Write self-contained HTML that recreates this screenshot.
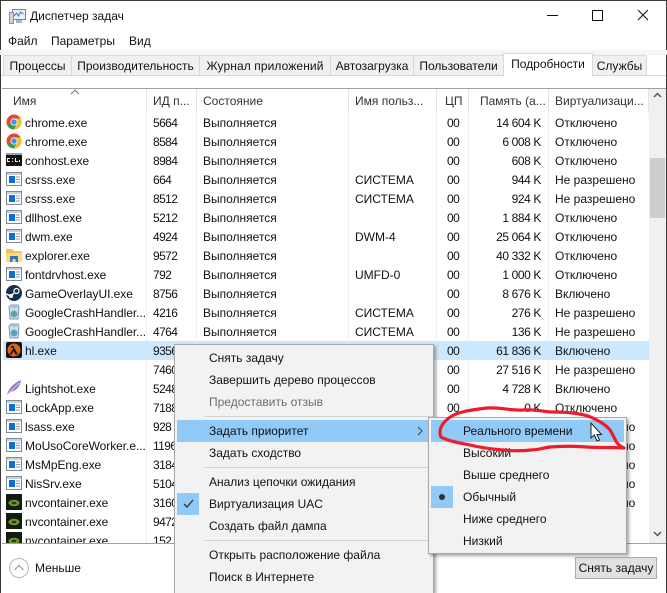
<!DOCTYPE html>
<html lang="ru"><head><meta charset="utf-8"><title>Диспетчер задач</title>
<style>
html,body{margin:0;padding:0;width:667px;height:593px;overflow:hidden}
body{background:#fff;position:relative;font:12px/16px "Liberation Sans",sans-serif;color:#111}
.a{position:absolute;white-space:nowrap}
.tab{position:absolute;top:55px;height:20px;background:#f0f0f0;border:1px solid #d9d9d9;border-bottom:0;box-sizing:border-box;text-align:center;line-height:20px;color:#111;font-size:12px}
.sep{position:absolute;top:89px;height:24px;width:1px;background:#e5e5e5}
.csep{position:absolute;top:113px;height:430px;width:1px;background:#e8f1f8}
.h{position:absolute;top:93px;color:#333;white-space:nowrap}
.row{position:absolute;left:3px;width:646px;height:19px;line-height:19px}
.row span{position:absolute;top:1px;white-space:nowrap}
.row svg{position:absolute;left:3px;top:1px}
.n{left:22px;letter-spacing:-.05px}.p{left:150px;letter-spacing:-.6px}.s{left:200px}.u{left:352px}.c{left:444px;letter-spacing:-.6px}.m{right:108px;letter-spacing:-.4px}.v{left:552px}
.menu{position:absolute;background:#f2f2f2;border:1px solid #a8a8a8;box-shadow:2px 2px 3px rgba(0,0,0,.35);box-sizing:border-box}
.mi{position:absolute;white-space:nowrap;line-height:22px;height:22px;color:#111}
.hl{position:absolute;background:#91c9f7}
.ms{position:absolute;height:1px;background:#d4d4d4}
</style></head>
<body>
<svg width="0" height="0" style="position:absolute">
<defs>
<symbol id="app" viewBox="0 0 16 16"><rect x=".5" y="1.5" width="15" height="13" fill="#fff" stroke="#7d8a96"/><rect x="1" y="2" width="14" height="2" fill="#c7d2dc"/><rect x="3" y="5" width="6" height="7" fill="#0a6fd8"/><path d="M10 6h4M10 8.500h4M10 11h4" stroke="#8b98a5"/></symbol>
<symbol id="chr" viewBox="0 0 16 16"><circle cx="8" cy="8" r="7.500" fill="#dd4b39"/><path d="M8 8 1.500 11.800A7.500 7.500 0 0 0 8 15.500L11.800 9z" fill="#3a9a4c"/><path d="M8 4.500h6.600A7.500 7.500 0 0 1 8 15.500L11 9z" fill="#f2c031"/><circle cx="8" cy="8" r="3.600" fill="#fff"/><circle cx="8" cy="8" r="2.800" fill="#4a8ee8"/></symbol>
<symbol id="con" viewBox="0 0 16 16"><rect y="1" width="16" height="13" fill="#111"/><rect y="1" width="16" height="2" fill="#9aa0a6"/><path d="M2 6h2v1H2v2h2v1H1V6zM6 6h1v1H6zM6 9h1v1H6zM9 6h1v3h2v1H9zM13 8h1v2h-1z" fill="#eee"/></symbol>
<symbol id="gch" viewBox="0 0 16 16"><path d="M3 3 5 1h7l1 2-1 12H4z" fill="#cfdfea" stroke="#7f98ad"/><circle cx="8" cy="10" r="3.500" fill="#5aa6e0"/><path d="M6 9l2 4 2-5z" fill="#5cae5a"/><path d="M5 3h6" stroke="#8fa6b8"/></symbol>
<symbol id="nv" viewBox="0 0 16 16"><rect width="16" height="16" fill="#161a12"/><ellipse cx="8" cy="9" rx="5.500" ry="3.200" fill="#6c9a2a"/><ellipse cx="8" cy="9" rx="2.500" ry="1.400" fill="#2a3a18"/></symbol>
</defs>
</svg>

<!-- window frame -->
<div class="a" style="left:0;top:0;width:667px;height:1px;background:#3a3a3a"></div>
<div class="a" style="left:0;top:0;width:1px;height:593px;background:#3a3a3a"></div>
<div class="a" style="left:666px;top:0;width:1px;height:593px;background:#3a3a3a"></div>

<!-- title -->
<svg class="a" style="left:9px;top:8px" width="17" height="17" viewBox="0 0 17 17"><rect x="3.500" y="1.500" width="13" height="10" fill="#e6f0f8" stroke="#76869a"/><path d="M5 8l2.500-3 2 3 2-4 3 2" fill="none" stroke="#3a78b8"/><rect x=".5" y="4.500" width="4" height="11" fill="#cbd3da" stroke="#8a939c"/><rect x="7" y="12" width="6" height="3" fill="#aab4bd"/></svg>
<div class="a" style="left:30px;top:8px">Диспетчер задач</div>
<div class="a" style="left:547px;top:15px;width:11px;height:1px;background:#111"></div>
<div class="a" style="left:592px;top:10px;width:9px;height:9px;border:1px solid #111"></div>
<svg class="a" style="left:637px;top:9px" width="12" height="12" viewBox="0 0 12 12"><path d="M1 1l10 10M11 1 1 11" stroke="#111" fill="none"/></svg>

<!-- menu bar -->
<div class="a" style="left:8px;top:33px">Файл</div>
<div class="a" style="left:51px;top:33px">Параметры</div>
<div class="a" style="left:129px;top:33px">Вид</div>

<!-- tabs -->
<div class="a" style="left:0;top:50px;width:667px;height:5px;background:#f5f5f5"></div>
<div class="a" style="left:1px;top:75px;width:665px;height:1px;background:#d9d9d9"></div>
<div class="tab" style="left:3px;width:69px">Процессы</div>
<div class="tab" style="left:71px;width:129px">Производительность</div>
<div class="tab" style="left:199px;width:132px;letter-spacing:.1px">Журнал приложений</div>
<div class="tab" style="left:330px;width:84px">Автозагрузка</div>
<div class="tab" style="left:413px;width:91px">Пользователи</div>
<div class="tab" style="left:592px;width:55px">Службы</div>
<div class="tab" style="left:503px;top:53px;width:90px;height:23px;background:#fff;line-height:21px">Подробности</div>

<!-- header -->
<div class="a" style="left:2px;top:88px;width:664px;height:1px;background:#a0a0a0"></div>
<svg class="a" style="left:70px;top:89px" width="10" height="6" viewBox="0 0 10 6"><path d="M1 5l4-4 4 4" fill="none" stroke="#777"/></svg>
<div class="h" style="left:13px">Имя</div>
<div class="h" style="left:153px">ИД п...</div>
<div class="h" style="left:203px">Состояние</div>
<div class="h" style="left:355px">Имя польз...</div>
<div class="h" style="left:445px">ЦП</div>
<div class="h" style="left:480px">Память (а...</div>
<div class="h" style="left:555px">Виртуализаци...</div>
<div class="sep" style="left:146px"></div><div class="sep" style="left:196px"></div><div class="sep" style="left:348px"></div><div class="sep" style="left:436px"></div><div class="sep" style="left:468px"></div><div class="sep" style="left:548px"></div><div class="sep" style="left:648px"></div>
<div class="csep" style="left:146px"></div><div class="csep" style="left:196px"></div><div class="csep" style="left:348px"></div><div class="csep" style="left:436px"></div><div class="csep" style="left:468px"></div><div class="csep" style="left:548px"></div>

<!-- scrollbar -->
<div class="a" style="left:649px;top:89px;width:17px;height:454px;background:#f0f0f0"></div>
<div class="a" style="left:650px;top:158px;width:15px;height:60px;background:#cdcdcd"></div>
<svg class="a" style="left:653px;top:92px" width="9" height="6" viewBox="0 0 9 6"><path d="M1 5l3.500-3.500L8 5" fill="none" stroke="#555" stroke-width="1.500"/></svg>
<svg class="a" style="left:653px;top:531px" width="9" height="6" viewBox="0 0 9 6"><path d="M1 1l3.500 3.500L8 1" fill="none" stroke="#555" stroke-width="1.500"/></svg>

<!-- rows -->
<div class="a" id="list" style="left:0;top:113px;width:649px;height:430px;overflow:hidden">
<div class="row" style="top:0"><svg width="16" height="16"><use href="#chr"/></svg><span class="n">chrome.exe</span><span class="p">5664</span><span class="s">Выполняется</span><span class="c">00</span><span class="m">14 604 K</span><span class="v">Отключено</span></div>
<div class="row" style="top:19px"><svg width="16" height="16"><use href="#chr"/></svg><span class="n">chrome.exe</span><span class="p">8584</span><span class="s">Выполняется</span><span class="c">00</span><span class="m">6 008 K</span><span class="v">Отключено</span></div>
<div class="row" style="top:38px"><svg width="16" height="16"><use href="#con"/></svg><span class="n">conhost.exe</span><span class="p">8984</span><span class="s">Выполняется</span><span class="c">00</span><span class="m">608 K</span><span class="v">Отключено</span></div>
<div class="row" style="top:57px"><svg width="16" height="16"><use href="#app"/></svg><span class="n">csrss.exe</span><span class="p">664</span><span class="s">Выполняется</span><span class="u">СИСТЕМА</span><span class="c">00</span><span class="m">944 K</span><span class="v">Не разрешено</span></div>
<div class="row" style="top:76px"><svg width="16" height="16"><use href="#app"/></svg><span class="n">csrss.exe</span><span class="p">8512</span><span class="s">Выполняется</span><span class="u">СИСТЕМА</span><span class="c">00</span><span class="m">924 K</span><span class="v">Не разрешено</span></div>
<div class="row" style="top:95px"><svg width="16" height="16"><use href="#app"/></svg><span class="n">dllhost.exe</span><span class="p">5212</span><span class="s">Выполняется</span><span class="c">00</span><span class="m">1 884 K</span><span class="v">Отключено</span></div>
<div class="row" style="top:114px"><svg width="16" height="16"><use href="#app"/></svg><span class="n">dwm.exe</span><span class="p">4924</span><span class="s">Выполняется</span><span class="u">DWM-4</span><span class="c">00</span><span class="m">25 064 K</span><span class="v">Отключено</span></div>
<div class="row" style="top:133px"><svg width="16" height="16" viewBox="0 0 16 16"><path d="M0 2h6l2 2h8v11H0z" fill="#f4c04e"/><rect x="0" y="6" width="16" height="9" fill="#fadb83"/><path d="M4 15V9h8v6h-2.500v-3h-3v3z" fill="#2f78b8"/></svg><span class="n">explorer.exe</span><span class="p">9572</span><span class="s">Выполняется</span><span class="c">00</span><span class="m">40 332 K</span><span class="v">Отключено</span></div>
<div class="row" style="top:152px"><svg width="16" height="16"><use href="#app"/></svg><span class="n">fontdrvhost.exe</span><span class="p">792</span><span class="s">Выполняется</span><span class="u">UMFD-0</span><span class="c">00</span><span class="m">1 000 K</span><span class="v">Отключено</span></div>
<div class="row" style="top:171px"><svg width="16" height="16" viewBox="0 0 16 16"><circle cx="8" cy="8" r="8" fill="#14304f"/><circle cx="10.500" cy="6" r="2.500" fill="none" stroke="#fff" stroke-width="1.200"/><path d="M0 9l5 2 3-3" stroke="#fff" stroke-width="1.500" fill="none"/><circle cx="5" cy="11" r="2" fill="#fff"/></svg><span class="n">GameOverlayUI.exe</span><span class="p">8756</span><span class="s">Выполняется</span><span class="c">00</span><span class="m">8 676 K</span><span class="v">Включено</span></div>
<div class="row" style="top:190px"><svg width="16" height="16"><use href="#gch"/></svg><span class="n">GoogleCrashHandler...</span><span class="p">4216</span><span class="s">Выполняется</span><span class="u">СИСТЕМА</span><span class="c">00</span><span class="m">276 K</span><span class="v">Не разрешено</span></div>
<div class="row" style="top:209px"><svg width="16" height="16"><use href="#gch"/></svg><span class="n">GoogleCrashHandler...</span><span class="p">4764</span><span class="s">Выполняется</span><span class="u">СИСТЕМА</span><span class="c">00</span><span class="m">136 K</span><span class="v">Не разрешено</span></div>
<div class="row" style="top:228px;background:#cce8ff"><svg width="16" height="16" viewBox="0 0 16 16"><rect width="16" height="16" rx="2" fill="#1a1210"/><circle cx="8" cy="8" r="6.500" fill="#d9641e"/><path d="M5 4h2.500l1 2.500L12 12.500H9.500L7.500 9 5.500 12.500H3.500L7 6.800 6.300 5.500H5z" fill="#1a1210"/></svg><span class="n">hl.exe</span><span class="p">9356</span><span class="s">Выполняется</span><span class="c">00</span><span class="m">61 836 K</span><span class="v">Включено</span></div>
<div class="row" style="top:247px"><span class="p">7460</span><span class="s">Выполняется</span><span class="c">00</span><span class="m">27 516 K</span><span class="v">Не разрешено</span></div>
<div class="row" style="top:266px"><svg width="16" height="16" viewBox="0 0 16 16"><path d="M1 15C2 9 8 3 15 0 14 6 11 11 4 12L1 15z" fill="#9a78c8"/><path d="M2 14 13 3" stroke="#d8c8ec"/></svg><span class="n">Lightshot.exe</span><span class="p">5248</span><span class="s">Выполняется</span><span class="c">00</span><span class="m">4 728 K</span><span class="v">Включено</span></div>
<div class="row" style="top:285px"><svg width="16" height="16"><use href="#app"/></svg><span class="n">LockApp.exe</span><span class="p">7188</span><span class="s">Выполняется</span><span class="c">00</span><span class="m">0 K</span><span class="v">Отключено</span></div>
<div class="row" style="top:304px"><svg width="16" height="16"><use href="#app"/></svg><span class="n">lsass.exe</span><span class="p">928</span><span class="v">Не разрешено</span></div>
<div class="row" style="top:323px"><svg width="16" height="16"><use href="#app"/></svg><span class="n">MoUsoCoreWorker.e...</span><span class="p">1196</span><span class="v">Не разрешено</span></div>
<div class="row" style="top:342px"><svg width="16" height="16"><use href="#app"/></svg><span class="n">MsMpEng.exe</span><span class="p">3184</span><span class="v">Не разрешено</span></div>
<div class="row" style="top:361px"><svg width="16" height="16"><use href="#app"/></svg><span class="n">NisSrv.exe</span><span class="p">5104</span><span class="v">Не разрешено</span></div>
<div class="row" style="top:380px"><svg width="16" height="16"><use href="#nv"/></svg><span class="n">nvcontainer.exe</span><span class="p">3160</span><span class="v">Не разрешено</span></div>
<div class="row" style="top:399px"><svg width="16" height="16"><use href="#nv"/></svg><span class="n">nvcontainer.exe</span><span class="p">9472</span></div>
<div class="row" style="top:418px"><svg width="16" height="16"><use href="#nv"/></svg><span class="n">nvcontainer.exe</span><span class="p">152</span></div>
</div>

<!-- footer -->
<div class="a" style="left:2px;top:543px;width:664px;height:50px;background:#fff;border-top:1px solid #a0a0a0;box-sizing:border-box"></div>
<svg class="a" style="left:9px;top:558px" width="20" height="20" viewBox="0 0 20 20"><circle cx="10" cy="10" r="9.500" fill="#fff" stroke="#b5b5b5"/><path d="M5.500 12 10 7.500l4.500 4.500" fill="none" stroke="#9a9a9a" stroke-width="1.200"/></svg>
<div class="a" style="left:35px;top:560px">Меньше</div>
<div class="a" style="left:575px;top:557px;width:82px;height:22px;background:#e1e1e1;border:1px solid #adadad;box-sizing:border-box;text-align:center;line-height:20px">Снять задачу</div>

<!-- context menu -->
<div class="menu" style="left:174px;top:344px;width:260px;height:249px;border-bottom:0">
<div class="ms" style="left:30px;top:71px;width:228px"></div>
<div class="ms" style="left:30px;top:122px;width:228px"></div>
<div class="ms" style="left:30px;top:195px;width:228px"></div>
<div class="hl" style="left:2px;top:75px;width:251px;height:22px"></div>
<div class="hl" style="left:2px;top:148px;width:22px;height:22px"></div>
<svg class="a" style="left:8px;top:154px" width="11" height="10" viewBox="0 0 11 10"><path d="M1 5l3 3 6-7" fill="none" stroke="#333" stroke-width="1.300"/></svg>
<svg class="a" style="left:242px;top:81px" width="6" height="10" viewBox="0 0 6 10"><path d="M1 1l4 4-4 4" fill="none" stroke="#444"/></svg>
<div class="mi" style="left:34px;top:2px">Снять задачу</div>
<div class="mi" style="left:34px;top:24px">Завершить дерево процессов</div>
<div class="mi" style="left:34px;top:46px;color:#6d6d6d">Предоставить отзыв</div>
<div class="mi" style="left:34px;top:75px">Задать приоритет</div>
<div class="mi" style="left:34px;top:97px">Задать сходство</div>
<div class="mi" style="left:34px;top:126px">Анализ цепочки ожидания</div>
<div class="mi" style="left:34px;top:148px">Виртуализация UAC</div>
<div class="mi" style="left:34px;top:170px">Создать файл дампа</div>
<div class="mi" style="left:34px;top:199px">Открыть расположение файла</div>
<div class="mi" style="left:34px;top:221px">Поиск в Интернете</div>
</div>

<!-- submenu -->
<div class="menu" style="left:428px;top:417px;width:199px;height:137px">
<div class="hl" style="left:2px;top:2px;width:193px;height:22px"></div>
<div class="hl" style="left:2px;top:68px;width:22px;height:22px"></div>
<div class="a" style="left:10px;top:76px;width:6px;height:6px;border-radius:50%;background:#333"></div>
<div class="mi" style="left:34px;top:2px">Реального времени</div>
<div class="mi" style="left:34px;top:24px">Высокий</div>
<div class="mi" style="left:34px;top:46px">Выше среднего</div>
<div class="mi" style="left:34px;top:68px">Обычный</div>
<div class="mi" style="left:34px;top:90px">Ниже среднего</div>
<div class="mi" style="left:34px;top:112px">Низкий</div>
</div>

<!-- red annotation and cursor -->
<svg class="a" style="left:0;top:0" width="667" height="593" viewBox="0 0 667 593">
<path d="M441 437C438 430 442 423 449 418C456 412 470 410 487 408C500 407 512 411 523 410C535 409 545 412 553 412C565 412 578 413 588 416C598 420 606 425 610 430C614 436 615 441 618 444C620 446 622 447 624 448C612 447 600 448 587 447C575 446 562 446 550 447C543 448 538 450 531 450C522 451 512 451 503 450C490 449 478 447 470 445C460 443 448 441 441 437Z" fill="none" stroke="#ec1c2c" stroke-width="3.200" stroke-linejoin="round"/>
<path d="M591 423V438L594.500 435 597 441 599.500 440 597 434.500H601.500Z" fill="#fff" stroke="#222" stroke-width="1"/>
</svg>
</body></html>
